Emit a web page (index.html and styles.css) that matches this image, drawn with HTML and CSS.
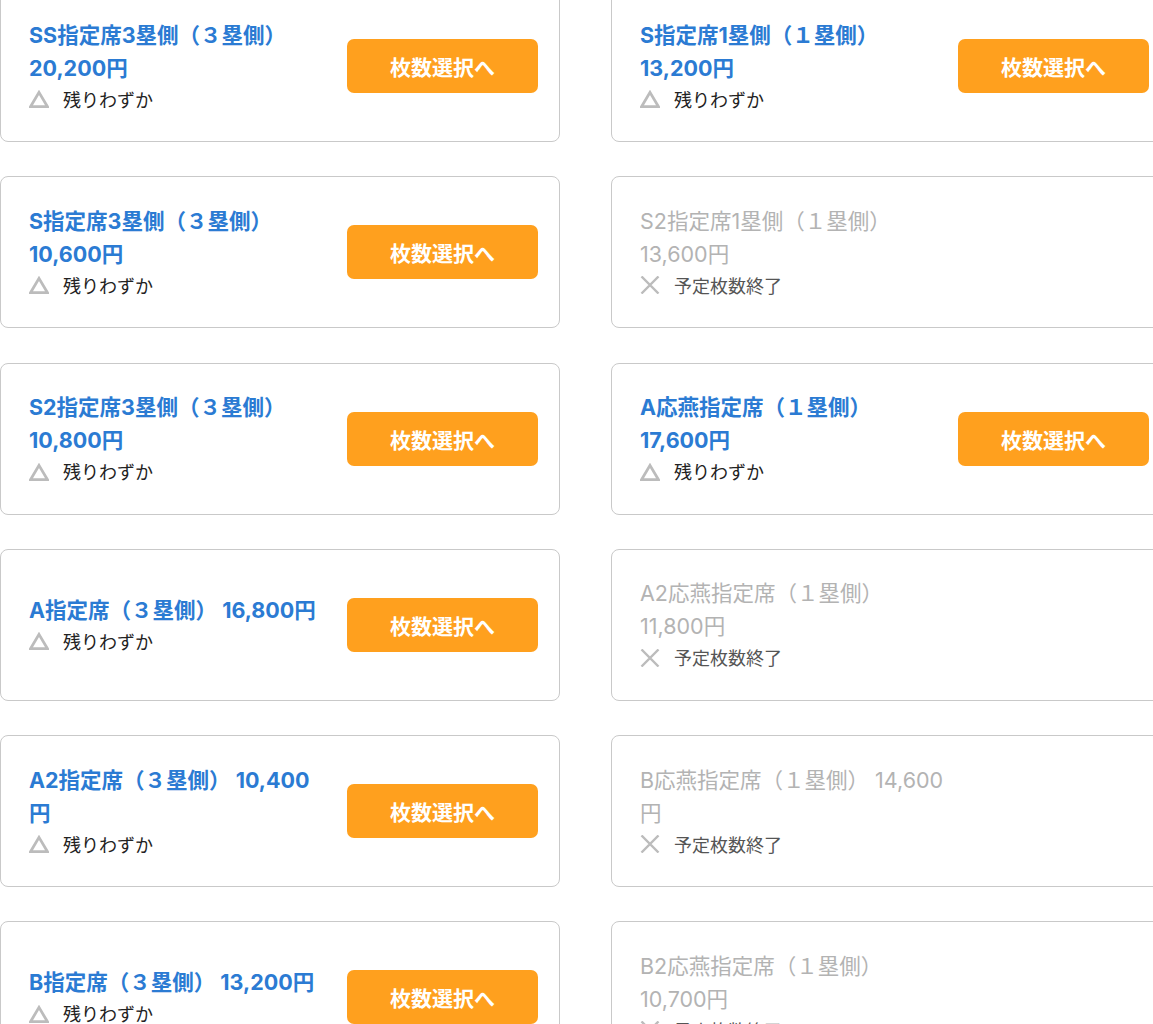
FILE: index.html
```html
<!DOCTYPE html>
<html lang="ja">
<head>
<meta charset="utf-8">
<title>席種選択</title>
<link rel="stylesheet" href="styles.css">
</head>
<body>
<div class="seats">
  <div class="card">
    <div class="info">
      <p class="name">SS指定席3塁側（３塁側）<br>20,200円</p>
      <p class="status"><svg class="ico" viewBox="0 0 20 18"><path d="M10 2.4 L18.4 16.6 H1.6 Z" fill="none" stroke="#bcbcbc" stroke-width="2.8"/></svg>残りわずか</p>
    </div>
    <button class="btn">枚数選択へ</button>
  </div>
  <div class="card">
    <div class="info">
      <p class="name">S指定席1塁側（１塁側）<br>13,200円</p>
      <p class="status"><svg class="ico" viewBox="0 0 20 18"><path d="M10 2.4 L18.4 16.6 H1.6 Z" fill="none" stroke="#bcbcbc" stroke-width="2.8"/></svg>残りわずか</p>
    </div>
    <button class="btn">枚数選択へ</button>
  </div>

  <div class="card">
    <div class="info">
      <p class="name">S指定席3塁側（３塁側）<br>10,600円</p>
      <p class="status"><svg class="ico" viewBox="0 0 20 18"><path d="M10 2.4 L18.4 16.6 H1.6 Z" fill="none" stroke="#bcbcbc" stroke-width="2.8"/></svg>残りわずか</p>
    </div>
    <button class="btn">枚数選択へ</button>
  </div>
  <div class="card off">
    <div class="info">
      <p class="name">S2指定席1塁側（１塁側）<br>13,600円</p>
      <p class="status"><svg class="ico" viewBox="0 0 20 18"><path d="M1.5 0.5 L18.5 17.5 M18.5 0.5 L1.5 17.5" fill="none" stroke="#bcbcbc" stroke-width="2.4"/></svg>予定枚数終了</p>
    </div>
  </div>

  <div class="card">
    <div class="info">
      <p class="name">S2指定席3塁側（３塁側）<br>10,800円</p>
      <p class="status"><svg class="ico" viewBox="0 0 20 18"><path d="M10 2.4 L18.4 16.6 H1.6 Z" fill="none" stroke="#bcbcbc" stroke-width="2.8"/></svg>残りわずか</p>
    </div>
    <button class="btn">枚数選択へ</button>
  </div>
  <div class="card">
    <div class="info">
      <p class="name">A応燕指定席（１塁側）<br>17,600円</p>
      <p class="status"><svg class="ico" viewBox="0 0 20 18"><path d="M10 2.4 L18.4 16.6 H1.6 Z" fill="none" stroke="#bcbcbc" stroke-width="2.8"/></svg>残りわずか</p>
    </div>
    <button class="btn">枚数選択へ</button>
  </div>

  <div class="card">
    <div class="info">
      <p class="name">A指定席（３塁側） 16,800円</p>
      <p class="status"><svg class="ico" viewBox="0 0 20 18"><path d="M10 2.4 L18.4 16.6 H1.6 Z" fill="none" stroke="#bcbcbc" stroke-width="2.8"/></svg>残りわずか</p>
    </div>
    <button class="btn">枚数選択へ</button>
  </div>
  <div class="card off">
    <div class="info">
      <p class="name">A2応燕指定席（１塁側）<br>11,800円</p>
      <p class="status"><svg class="ico" viewBox="0 0 20 18"><path d="M1.5 0.5 L18.5 17.5 M18.5 0.5 L1.5 17.5" fill="none" stroke="#bcbcbc" stroke-width="2.4"/></svg>予定枚数終了</p>
    </div>
  </div>

  <div class="card">
    <div class="info">
      <p class="name">A2指定席（３塁側） 10,400<br>円</p>
      <p class="status"><svg class="ico" viewBox="0 0 20 18"><path d="M10 2.4 L18.4 16.6 H1.6 Z" fill="none" stroke="#bcbcbc" stroke-width="2.8"/></svg>残りわずか</p>
    </div>
    <button class="btn">枚数選択へ</button>
  </div>
  <div class="card off">
    <div class="info">
      <p class="name">B応燕指定席（１塁側） 14,600<br>円</p>
      <p class="status"><svg class="ico" viewBox="0 0 20 18"><path d="M1.5 0.5 L18.5 17.5 M18.5 0.5 L1.5 17.5" fill="none" stroke="#bcbcbc" stroke-width="2.4"/></svg>予定枚数終了</p>
    </div>
  </div>

  <div class="card">
    <div class="info">
      <p class="name">B指定席（３塁側） 13,200円</p>
      <p class="status"><svg class="ico" viewBox="0 0 20 18"><path d="M10 2.4 L18.4 16.6 H1.6 Z" fill="none" stroke="#bcbcbc" stroke-width="2.8"/></svg>残りわずか</p>
    </div>
    <button class="btn">枚数選択へ</button>
  </div>
  <div class="card off">
    <div class="info">
      <p class="name">B2応燕指定席（１塁側）<br>10,700円</p>
      <p class="status"><svg class="ico" viewBox="0 0 20 18"><path d="M1.5 0.5 L18.5 17.5 M18.5 0.5 L1.5 17.5" fill="none" stroke="#bcbcbc" stroke-width="2.4"/></svg>予定枚数終了</p>
    </div>
  </div>
</div>
</body>
</html>
```
FILE: styles.css
```css
html, body {
  margin: 0;
  padding: 0;
  background: #fff;
  overflow: hidden;
}
body {
  font-family: "Noto Sans CJK JP", "Noto Sans", sans-serif;
  color: #222;
}
.seats {
  display: grid;
  grid-template-columns: 560px 560px;
  column-gap: 51px;
  row-gap: 34.3px;
  margin-top: -10px;
  width: 1171px;
}
.card {
  box-sizing: border-box;
  height: 152px;
  border: 1px solid #c9c9c9;
  border-radius: 8px;
  display: flex;
  align-items: center;
  padding: 0 21px 0 28px;
}
.info {
  flex: 1;
  margin-right: 14px;
  white-space: nowrap;
}
.off .info {
  flex: none;
  width: 330px;
}
.name {
  margin: 0;
  font-family: "Inter", "Noto Sans CJK JP", sans-serif;
  font-size: 21.5px;
  font-weight: 700;
  line-height: 33px;
  color: #2b7bd3;
}
.off .name {
  font-weight: 400;
  color: #b3b3b3;
}
.status {
  margin: 0;
  display: flex;
  align-items: center;
  font-size: 18px;
  line-height: 29px;
  color: #222;
}
.off .status {
  color: #555;
}
.ico {
  width: 20px;
  height: 18px;
  margin-right: 14px;
  flex: none;
}
.btn {
  flex: none;
  width: 191px;
  height: 54px;
  border: none;
  border-radius: 7px;
  background: #ffa01e;
  color: #fff;
  font-family: "Noto Sans CJK JP", sans-serif;
  font-size: 21px;
  font-weight: 700;
  padding: 0;
}
```
